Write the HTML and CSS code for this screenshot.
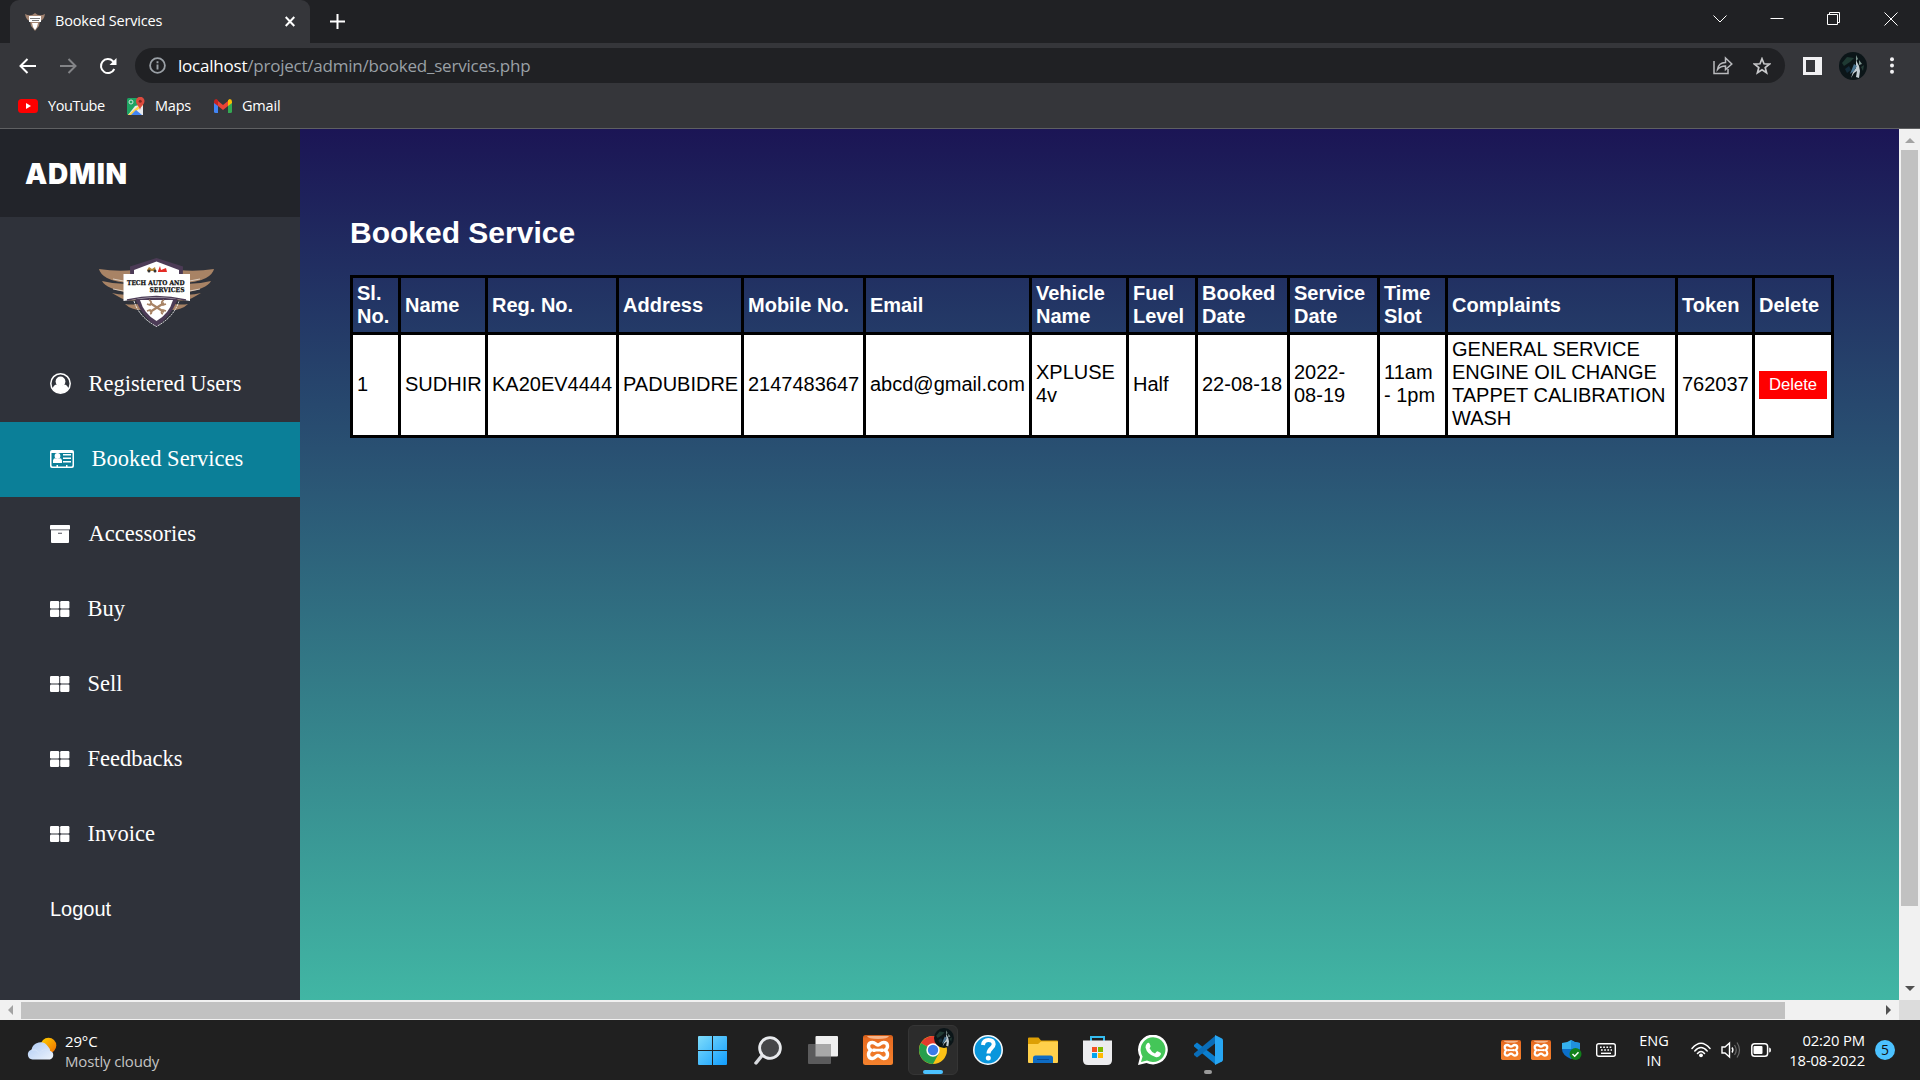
FILE: index.html
```html
<!DOCTYPE html>
<html lang="en">
<head>
<meta charset="utf-8">
<title>Booked Services</title>
<link rel="stylesheet" href="styles.css">
</head>
<body>
<svg class="defs" aria-hidden="true">
  <defs>
    <linearGradient id="orange" x1="0" y1="0" x2="0" y2="1"><stop offset="0" stop-color="#c95a18"/><stop offset=".12" stop-color="#e86c22"/><stop offset="1" stop-color="#f5822d"/></linearGradient>
    <linearGradient id="win" x1="0" y1="0" x2="1" y2="1"><stop offset="0" stop-color="#7fdcfb"/><stop offset="1" stop-color="#119dfd"/></linearGradient>
    <symbol id="xampp" viewBox="0 0 30 30">
      <rect width="30" height="30" rx="2.5" fill="url(#orange)"/>
      <path d="M4 1h22q-1 3-11 3T4 1z" fill="#f5b48b"/>
      <path d="M8 15.200C4 12.500 5 7.500 9.500 7.500C12.500 7.500 12.500 10 15 10S17.500 7.500 20.500 7.500C25 7.500 26 12.500 22 15.200C26 18 25 23.500 20.500 23.500C17.500 23.500 17.500 20.500 15 20.500S12.500 23.500 9.500 23.500C5 23.500 4 18 8 15.200z" fill="none" stroke="#fff" stroke-width="3.400"/>
      <path d="M11 13.500v3.500M19 13.500v3.500M11 15.200h8" stroke="#fff" stroke-width="2.800"/>
    </symbol>
    <symbol id="avatar" viewBox="0 0 28 28">
      <circle cx="14" cy="14" r="14" fill="#0b1518"/>
      <path d="M3 11l5-6 7 1-4 4-6 4z" fill="#1f3a33"/><path d="M6 17l4-3 2 4-4 3z" fill="#142c3a"/>
      <path d="M17 3l2 4-2 2zM20 8l3 4-3 1z" fill="#7f9690"/>
      <path d="M17 8l3 6 1 5-1 7-3-1 1-6-3 2-3 5 2-6 3-4z" fill="#c3ced4"/>
      <path d="M15 12l3 2-3 5-4 3z" fill="#4a7591"/><path d="M22 15l3-2-1 6z" fill="#243c36"/>
    </symbol>
    <symbol id="large" viewBox="0 0 20 16">
      <rect width="9.200" height="7.400" rx="1.200"/><rect x="10.200" width="9.200" height="7.400" rx="1.200"/>
      <rect y="8.600" width="9.200" height="7.400" rx="1.200"/><rect x="10.200" y="8.600" width="9.200" height="7.400" rx="1.200"/>
    </symbol>
    <symbol id="crest" viewBox="0 0 115 70">
      <g fill="#a88365">
        <path d="M0 11q18 3 36 1v13q-19 0-28-5Q1 16 0 11z"/><path d="M3 23q15 4 33 2v9q-14 1-24-4Q5 27 3 23z"/>
        <path d="M13 35q10 3 24 1v6q-9 2-17-3z"/><path d="M26 46q6 1 13 0l4 6q-11 0-17-6z"/>
        <path d="M115 11q-18 3-36 1v13q19 0 28-5 7-4 8-9z"/><path d="M112 23q-15 4-33 2v9q14 1 24-4 7-3 9-7z"/>
        <path d="M102 35q-10 3-24 1v6q9 2 17-3z"/><path d="M89 46q-6 1-13 0l-4 6q11 0 17-6z"/>
      </g>
      <path d="M14 21q10 3 22 2M14 31q10 3 22 2M101 21q-10 3-22 2M101 31q-10 3-22 2" stroke="#eadfd5" fill="none" stroke-width=".8"/>
      <path d="M57.500 0L84 8.500Q85 48 57.500 69Q30 48 31 8.500z" fill="#4c3b56"/>
      <path d="M57.500 3.500L80 12v5H35v-5z" fill="#fff"/>
      <path d="M41 42h33q-4 14-16.500 21Q45 56 41 42z" fill="#fff"/>
      <path d="M35 43q5 16 22.500 25.500Q75 59 80 43" fill="none" stroke="#fff" stroke-width=".9" stroke-dasharray="2 .8"/>
      <path d="M24.500 16H91v27q-33-7-66.500 0z" fill="#fff"/>
      <path d="M28 42q29-7 59 0" fill="none" stroke="#4c3b56" stroke-width="1.300"/>
      <path d="M48 12l2-3 3 2 3-2 1 4h-9z" fill="#b9893a"/><circle cx="50" cy="13" r="1.500" fill="#333"/><circle cx="56" cy="13" r="1.500" fill="#333"/>
      <path d="M59 13l2-5 1 4 5-2 1 4h-9z" fill="#e42b25"/>
      <path d="M51 45l14 9M65 45l-14 9" stroke="#a88365" stroke-width="2.200"/>
      <g fill="none" stroke="#a88365" stroke-width="1.800"><path d="M50 42q4 2 1 5l-3-1M65 42q-4 2-1 5l3-1M48 53l3-1q3 3 0 4M67 53l-3-1q-3 3 0 4"/></g>
      <g class="crest-text"><text x="28" y="27.200" textLength="57.500" lengthAdjust="spacingAndGlyphs">TECH AUTO AND</text><text x="50.500" y="34.400" textLength="35" lengthAdjust="spacingAndGlyphs">SERVICES</text></g>
    </symbol>
  </defs>
</svg>

<header class="browser">
  <div class="tabs">
    <div class="tab">
      <svg width="20" height="20" viewBox="0 0 20 20"><path d="M0 2q6 3 10-1 4 4 10 1-1 6-5 7l-1 5-4 5-4-5-1-5Q1 8 0 2z" fill="#a48572"/><path d="M4 4h12v6H4zM7 11h6l-1 4-2 3-2-3z" fill="#fff"/><path d="M5 6.500h10M7 8.500h7" stroke="#555" stroke-width=".8"/></svg>
      <span class="tab-title">Booked Services</span>
      <svg width="10" height="11" viewBox="0 0 10 11"><path d="M.7 1l8.600 9M9.300 1L.7 10" stroke="#fff" stroke-width="2"/></svg>
    </div>
    <svg class="plus" width="15" height="15" viewBox="0 0 15 15"><path d="M7.500 0v15M0 7.500h15" stroke="#fff" stroke-width="2"/></svg>
    <div class="window-controls">
      <svg width="14" height="14" viewBox="0 0 14 14"><path d="M.5 3.500L7 10l6.500-6.500"/></svg>
      <svg width="14" height="14" viewBox="0 0 14 14"><path d="M.5 6.500h13"/></svg>
      <svg width="14" height="14" viewBox="0 0 14 14"><path d="M.5 2.500h10v10H.5zM2.500 2.500v-2h10v10h-2"/></svg>
      <svg width="14" height="14" viewBox="0 0 14 14"><path d="M.5.500l13 13M13.500.500l-13 13"/></svg>
    </div>
  </div>
  <div class="toolbar">
    <svg width="18" height="16" viewBox="0 0 18 16"><path d="M17 8H2M8.500 1L1.500 8l7 7" stroke="#fff"/></svg>
    <svg width="18" height="16" viewBox="0 0 18 16"><path d="M1 8h15M9.500 1l7 7-7 7" stroke="#838487"/></svg>
    <svg width="18" height="18" viewBox="0 0 18 18"><path d="M15.300 12A7 7 0 1 1 14 4.200L16 6" stroke="#fff"/><path d="M17.500 1v7h-7z" fill="#fff"/></svg>
    <div class="address">
      <svg width="17" height="17" viewBox="0 0 17 17"><circle cx="8.500" cy="8.500" r="7.400" stroke="#9aa0a6" stroke-width="1.800"/><path d="M8.500 7.500v5M8.500 4.300v1.900" stroke="#9aa0a6" stroke-width="1.900"/></svg>
      <span class="url"><b>localhost</b>/project/admin/booked_services.php</span>
      <svg class="share" width="20" height="19" viewBox="0 0 20 19"><path d="M1 5v12.500h14V13" stroke="#b9babd" stroke-width="1.500"/><path d="M4.500 13.500q1-7 8-7V2l6.300 6-6.300 5.500V10q-5 0-8 3.500z" stroke="#b9babd" stroke-width="1.500"/></svg>
      <svg width="18" height="18" viewBox="0 0 18 18"><path d="M9 1.700l2 5.100 5.400.3-4.200 3.400 1.400 5.300L9 12.800l-4.600 3 1.400-5.300L1.600 7.100 7 6.800z" stroke="#c7c8ca" stroke-width="1.700"/></svg>
    </div>
    <svg class="panel" width="19" height="18" viewBox="0 0 19 18"><path d="M0 0h19v18H0zM3 3v12h9V3z" fill="#f1f1f3" fill-rule="evenodd"/></svg>
    <svg class="me" width="28" height="28"><use href="#avatar"/></svg>
    <svg width="4" height="17" viewBox="0 0 4 17"><g fill="#f1f1f3"><circle cx="2" cy="2.200" r="2"/><circle cx="2" cy="8.500" r="2"/><circle cx="2" cy="14.800" r="2"/></g></svg>
  </div>
  <nav class="bookmarks">
    <a><svg width="20" height="14" viewBox="0 0 20 14"><rect width="20" height="14" rx="3.500" fill="#f00"/><path d="M8 4l5 3-5 3z" fill="#fff"/></svg><span class="w-yt">YouTube</span></a>
    <a><svg width="18" height="18" viewBox="0 0 18 18"><rect y="1" width="16" height="17" rx="1.500" fill="#1ea362"/><path d="M8 9l8-2v11H1z" fill="#e8eaed"/><path d="M1 18L16 5v3L5 18z" fill="#ffd24a"/><path d="M4 18l5-5 6 5z" fill="#4285f4"/><circle cx="4" cy="5" r="2" fill="none" stroke="#cfe9dc"/><path d="M13 13C12.500 9 9 8 9 4a4 4 0 0 1 8.500 0c0 4-4 5-4.500 9z" fill="#dd4b3e"/><circle cx="13.200" cy="4.200" r="1.500" fill="#822a23"/></svg><span class="w-maps">Maps</span></a>
    <a><svg width="18" height="14" viewBox="0 0 18 14"><path d="M0 3h4v11H1.500Q0 14 0 12.500z" fill="#4285f4"/><path d="M14 3h4v9.500q0 1.500-1.500 1.500H14z" fill="#34a853"/><path d="M4 2l5 4 5-4v5l-5 4-5-4z" fill="#ea4335"/><path d="M0 2.500Q0 0 2.200 0 3 .4 4 1.300V7L0 4z" fill="#c5221f"/><path d="M18 2.500Q18 0 15.800 0q-.8.400-1.800 1.300V7l4-3z" fill="#fbbc04"/></svg><span class="w-gmail">Gmail</span></a>
  </nav>
</header>

<div class="viewport">
  <div class="page">
    <aside class="sidebar">
      <div class="brand">ADMIN</div>
      <div class="logo"><svg width="115" height="70"><use href="#crest"/></svg></div>
      <nav class="menu">
        <a><svg width="21" height="21" viewBox="0 0 21 21"><circle cx="10.500" cy="10.500" r="9.700" fill="none" stroke="#fff" stroke-width="1.500"/><circle cx="10.500" cy="8.500" r="4.900"/><path d="M2.500 15.500q1.500-4 4.300-4 3.700 2.500 7.400 0 2.800 0 4.300 4-3 4.500-8 4.500t-8-4.500z"/></svg>Registered Users</a>
        <a class="active"><svg width="24" height="18" viewBox="0 0 24 18"><path d="M2 0h20q2 0 2 2v14q0 2-2 2H2q-2 0-2-2V2q0-2 2-2zM1.500 3v12q0 1.300 1 1.500h4V15h1.500v1.500h8V15H17.500v1.500h4q1-.2 1-1.500V3z" fill-rule="evenodd"/><circle cx="7.500" cy="6" r="2.900"/><path d="M3 13V10.500Q3.500 8.300 5 8.300q2.500 1.500 5 0 1.500 0 2 2.200V13z"/><path d="M13 4.700h8M13 8.200h8M13 11.700h8" stroke="#fff" stroke-width="1.500"/></svg>Booked Services</a>
        <a><svg width="21" height="18" viewBox="0 0 21 18"><rect width="20" height="4.500" rx=".8"/><path d="M1 5.200h18V17q0 1-1 1H2q-1 0-1-1z"/><path d="M8 8.300h4" stroke="#6b6d74" stroke-width="1.200"/></svg>Accessories</a>
        <a><svg width="20" height="16"><use href="#large"/></svg>Buy</a>
        <a><svg width="20" height="16"><use href="#large"/></svg>Sell</a>
        <a><svg width="20" height="16"><use href="#large"/></svg>Feedbacks</a>
        <a><svg width="20" height="16"><use href="#large"/></svg>Invoice</a>
        <a class="logout">Logout</a>
      </nav>
    </aside>
    <main class="content">
      <h1>Booked Service</h1>
      <table class="bookings">
        <colgroup><col class="c1"><col class="c2"><col class="c3"><col class="c4"><col class="c5"><col class="c6"><col class="c7"><col class="c8"><col class="c9"><col class="c10"><col class="c11"><col class="c12"><col class="c13"><col class="c14"></colgroup>
        <thead>
          <tr><th>Sl. No.</th><th>Name</th><th>Reg. No.</th><th>Address</th><th>Mobile No.</th><th>Email</th><th>Vehicle Name</th><th>Fuel Level</th><th>Booked Date</th><th>Service Date</th><th>Time Slot</th><th>Complaints</th><th>Token</th><th>Delete</th></tr>
        </thead>
        <tbody>
          <tr><td>1</td><td>SUDHIR</td><td>KA20EV4444</td><td>PADUBIDRE</td><td>2147483647</td><td>abcd@gmail.com</td><td>XPLUSE<br>4v</td><td>Half</td><td>22-08-18</td><td>2022-<br>08-19</td><td>11am<br>- 1pm</td><td>GENERAL SERVICE<br>ENGINE OIL CHANGE<br>TAPPET CALIBRATION<br>WASH</td><td>762037</td><td class="action"><button class="delete">Delete</button></td></tr>
        </tbody>
      </table>
    </main>
  </div>
  <div class="vbar"><i class="up"></i><i class="vthumb"></i><i class="down"></i></div>
  <div class="hbar"><i class="left"></i><i class="hthumb"></i><i class="right"></i></div>
  <div class="corner"></div>
</div>

<footer class="taskbar">
  <div class="weather">
    <svg width="30" height="24" viewBox="0 0 30 24"><defs><linearGradient id="sun" x1="0" y1="0" x2="1" y2="1"><stop offset="0" stop-color="#ffd400"/><stop offset="1" stop-color="#ef6a00"/></linearGradient><linearGradient id="cl" x1="0" y1="0" x2="1" y2="1"><stop offset="0" stop-color="#aecbf5"/><stop offset="1" stop-color="#edf3fb"/></linearGradient></defs><circle cx="21.500" cy="8.500" r="7.800" fill="url(#sun)"/><path d="M5.500 22.500a5 5 0 0 1-1-9.800A9 9 0 0 1 21 9.500q2 2 2 4.200a4.600 4.600 0 0 1 0 8.800z" fill="url(#cl)"/><path d="M4.500 13q5-1.500 8 3 4-5 10-3" stroke="#d6e4f8" fill="none"/></svg>
    <div class="weather-text"><span class="w-temp">29°C</span><span class="w-cond">Mostly cloudy</span></div>
  </div>
  <div class="apps">
    <a><svg width="29" height="29" viewBox="0 0 29 29"><path d="M1 0h13v14H0V1q0-1 1-1zM15 0h13q1 0 1 1v13H15zM0 15h14v14H1q-1 0-1-1zM15 15h14v13q0 1-1 1H15z" fill="url(#win)"/></svg></a>
    <a><svg width="28" height="29" viewBox="0 0 28 29"><path d="M8.500 19L2 27" stroke="#d8dade" stroke-width="3.500" stroke-linecap="round"/><circle cx="16" cy="12" r="10.400" fill="#454648" stroke="#e8eaed" stroke-width="2.800"/></svg></a>
    <a><svg width="30" height="29" viewBox="0 0 30 29"><rect x="7.500" width="22.500" height="20.500" rx="1" fill="#efefef"/><rect y="8" width="23" height="20" rx="1" fill="#5b5b5c"/><path d="M7.500 8H23v12.500H7.500z" fill="#a8a8a8"/></svg></a>
    <a><svg width="30" height="30"><use href="#xampp"/></svg></a>
    <a class="running"><svg width="36" height="38" viewBox="0 0 36 38"><circle cx="15" cy="23" r="14" fill="#fbc116"/><path d="M15 23L2.900 16A14 14 0 0 1 27.100 16z" fill="#e33b2e"/><path d="M2.900 16A14 14 0 0 0 15 37l6-11-6-3z" fill="#269f4c"/><circle cx="15" cy="23" r="6.700" fill="#fff"/><circle cx="15" cy="23" r="5.200" fill="#3a7bea"/><use href="#avatar" x="16" y="1" width="20" height="20"/></svg></a>
    <a><svg width="30" height="30" viewBox="0 0 30 30"><circle cx="15" cy="15" r="14.200" fill="#0996dc" stroke="#f4f8fb" stroke-width="1.600"/><path d="M10 10q.5-5 5.500-5t5.200 4.300c0 4-5.200 4-5.200 9.200" fill="none" stroke="#fff" stroke-width="4"/><circle cx="15.300" cy="23" r="2.500" fill="#fff"/></svg></a>
    <a><svg width="30" height="27" viewBox="0 0 30 27"><path d="M0 1.500Q0 .500 1 .500h9.500L13 3.500h16q1 0 1 1V12H0z" fill="#dd9f04"/><path d="M0 7h10l3-2.500h17V25q0 1-1 1H1q-1 0-1-1z" fill="#ffd04b"/><path d="M5 26v-5q0-2.500 2.500-2.500h15q2.500 0 2.500 2.500v5z" fill="#0e6cc4"/><path d="M9 22.500h12" stroke="#084a91"/></svg></a>
    <a><svg width="29" height="29" viewBox="0 0 29 29"><path d="M8 6V1h13v5" fill="none" stroke="#35bdf0" stroke-width="2"/><path d="M0 4.500h29V24q0 5-5 5H5q-5 0-5-5z" fill="#ececee"/><path d="M9 11h5v5H9z" fill="#f25022"/><path d="M15 11h5v5h-5z" fill="#7fba00"/><path d="M9 17h5v5H9z" fill="#00a4ef"/><path d="M15 17h5v5h-5z" fill="#ffb900"/></svg></a>
    <a><svg width="30" height="30" viewBox="0 0 30 30"><path d="M0 30l2-8A14.900 14.900 0 1 1 8.500 28z" fill="#fff"/><path d="M3 27l1.600-5.600A12.400 12.400 0 1 1 9 25.500z" fill="#44c658"/><path d="M9 8.500q1.500-1.500 2.500 0l1 2.500q.2 1-1 2.200 2 4 5.500 5.200l1.500-1.700q.6-.6 1.500-.2l2.500 1.300q.8.500.2 2-1.500 3-5.200 2.200Q9 19.500 7.500 12.500 7.500 10 9 8.500z" fill="#fff"/></svg></a>
    <a class="open"><svg width="30" height="30" viewBox="0 0 30 30"><path d="M1 10l3-2.500 18 14V29L1 11.500z" fill="#0b7fd0"/><path d="M1 20l3 2.500 18-14V1L1 18.500z" fill="#0a6db8"/><path d="M22 0l7 3.500q1 .5 1 2v19q0 1.500-1 2L22 30z" fill="#27a6f3"/></svg></a>
  </div>
  <div class="tray">
    <svg width="20" height="20"><use href="#xampp"/></svg>
    <svg width="20" height="20"><use href="#xampp"/></svg>
    <svg width="20" height="20" viewBox="0 0 20 20"><path d="M0 3q5 0 9-3 4 3 9 3v6H0z" fill="#35b1ee"/><path d="M9 0q4 3 9 3v6H9z" fill="#2090dc"/><path d="M0 9h18q0 6-9 10Q0 15 0 9z" fill="#0c6fc9"/><circle cx="13.500" cy="14" r="6" fill="#11801b"/><path d="M10.500 14l2.200 2.200 3.800-4" fill="none" stroke="#fff" stroke-width="1.500"/></svg>
    <svg width="20" height="14" viewBox="0 0 20 14"><rect x=".7" y=".7" width="18.600" height="12.600" rx="2" fill="none" stroke="#fff" stroke-width="1.400"/><path d="M4 4.200h12M5 7h11" stroke="#fff" stroke-width="1.600" stroke-dasharray="1.700 1.500"/><path d="M5 10.300h10" stroke="#fff" stroke-width="1.400"/></svg>
    <div class="lang"><span>ENG</span><span>IN</span></div>
    <svg width="20" height="16" viewBox="0 0 20 16"><g fill="none" stroke="#fff" stroke-width="1.500" stroke-linecap="round"><path d="M1 6.500q9-10.500 18 0M3.800 9q6.200-7 12.400 0M6.500 11.500q3.500-4 7 0"/></g><circle cx="10" cy="13.300" r="1.900" fill="#fff"/></svg>
    <svg width="20" height="18" viewBox="0 0 20 18"><path d="M1 6h3l4.500-4v14L4 12H1z" fill="none" stroke="#fff" stroke-width="1.400"/><path d="M11 6.500q1.800 2.500 0 5" fill="none" stroke="#fff" stroke-width="1.400"/><path d="M13.500 4q3.500 5 0 10M16 1.500q5 7.500 0 15" fill="none" stroke="#6a6a6a" stroke-width="1.200"/></svg>
    <svg width="20" height="14" viewBox="0 0 20 14"><rect x=".8" y=".8" width="15.800" height="12.400" rx="2.800" fill="none" stroke="#fff" stroke-width="1.500"/><rect x="2.500" y="3" width="9" height="8" rx="1" fill="#fff"/><path d="M18.200 4.500q1.800 0 1.800 2.500t-1.800 2.500z" fill="#fff"/></svg>
    <div class="clock"><span class="w-time">02:20 PM</span><span class="w-date">18-08-2022</span></div>
    <span class="badge">5</span>
  </div>
</footer>
</body>
</html>
```
FILE: styles.css
```css
* { box-sizing: border-box; }
body {
  margin: 0; width: 1920px; height: 1080px; overflow: hidden;
  display: flex; flex-direction: column;
  font-family: "Liberation Sans", Arial, sans-serif;
}
svg { display: block; flex: none; }
.defs { position: absolute; width: 0; height: 0; }

/* Browser chrome */
.browser { height: 129px; background: #35363a; border-bottom: 1px solid #5f6062; color: #fff; font-family: "Open Sans", sans-serif; }
.tabs { height: 43px; background: #202124; display: flex; align-items: flex-start; padding-left: 10px; }
.tab { width: 300px; height: 43px; background: #35363a; border-radius: 9px 9px 0 0; padding: 3px 15px 4px; display: flex; align-items: center; }
.tab > svg:first-child { margin-top: 1px; }
.tab-title { flex: 1; margin-left: 10px; font-size: 14.5px; letter-spacing: -.2px; line-height: 20px; margin-top: -1px; }
.plus { margin: 14px 0 0 20px; }
.window-controls { margin-left: auto; display: flex; gap: 43px; padding: 12px 22px 0 0; }
.window-controls path { fill: none; stroke: #fff; stroke-width: 1; }
.toolbar { height: 45px; padding: 0 26px 0 19px; display: flex; align-items: center; }
.toolbar > svg path { stroke-width: 2; }
.toolbar > svg, .address svg { fill: none; }
.toolbar > svg + svg { margin-left: 22px; }
.address { flex: 1; height: 35px; margin: 0 18px; border-radius: 18px; background: #202124; display: flex; align-items: center; padding: 0 14px; }
.url { flex: 1; margin-left: 12px; color: #9aa0a6; font-size: 17px; letter-spacing: -.22px; line-height: 24px; }
.url b { font-weight: 400; color: #fff; }
.share { margin-right: 20px; }
.toolbar > .me { margin: 0 1px 0 17px; }
.bookmarks { height: 35px; padding-left: 18px; display: flex; gap: 22px; align-items: center; font-size: 14.5px; }
.bookmarks a { display: flex; align-items: center; gap: 10px; line-height: 20px; }
.bookmarks span { white-space: nowrap; letter-spacing: -.2px; }
.bookmarks .w-yt { width: 57px; letter-spacing: -.4px; } .w-maps { width: 37px; } .w-gmail { width: 38px; }

/* Page viewport and scrollbars */
.viewport { height: 891px; display: grid; grid-template: 871px 20px / 1899px 21px; }
.page { display: flex; overflow: hidden; }
.vbar, .hbar { background: #f1f1f1; display: flex; align-items: center; }
.vbar { flex-direction: column; }
.corner { background: #dcdcdc; }
.vthumb { width: 17px; height: 756px; margin-top: 7px; background: #c1c1c1; }
.hthumb { height: 17px; width: 1764px; margin-left: 8px; background: #c1c1c1; }
.up, .down { border: 5px solid transparent; border-top: 0; border-bottom: 5px solid #a3a3a3; margin-top: 9px; }
.down { border-top: 5px solid #505050; border-bottom: 0; margin: auto 0 9px; }
.left, .right { border: 5px solid transparent; border-left: 0; border-right: 5px solid #a3a3a3; margin-left: 8px; }
.right { border-left: 5px solid #505050; border-right: 0; margin: 0 8px 0 auto; }

/* Admin sidebar */
.sidebar { width: 300px; background: #2f323a; color: #fff; }
.brand { height: 88px; padding-left: 25px; background: #22242a; font: 900 28px/91px Inter, sans-serif; letter-spacing: .8px; }
.logo { height: 130px; padding: 41px 0 0 99px; }
.crest-text { font: 700 6.600px "DejaVu Serif", serif; fill: #111; stroke: #111; stroke-width: .25; }
.menu a { height: 75px; padding: 0 0 2px 50px; display: flex; align-items: center; gap: 17.5px; font: 22.500px "Liberation Serif", "Times New Roman", serif; }
.menu svg { fill: #fff; }
.menu .active { background: #0b7f98; }
.menu .logout { padding-bottom: 0; font: 20px "Liberation Sans", Arial, sans-serif; }

/* Bookings */
.content { flex: 1; padding: 86px 0 0 50px; background: linear-gradient(#1b1555, #41b6a4); }
.content h1 { margin: 0 0 25px; font-size: 30px; line-height: 35px; color: #fff; }
.bookings { width: 1484px; table-layout: fixed; border-collapse: collapse; font-size: 20px; line-height: 23px; }
.bookings th, .bookings td { border: 3px solid #000; padding: 4px 0 4px 4px; text-align: left; vertical-align: middle; }
.bookings th { color: #fff; }
.bookings td { background: #fff; color: #000; white-space: nowrap; padding: 3px 0 5px 4px; }
.bookings .action { padding: 4px 0 4px 4px; }
.bookings thead tr { height: 57px; }
.bookings tbody tr { height: 103px; }
.c1 { width: 48px; } .c2 { width: 87px; } .c3 { width: 131px; } .c4 { width: 125px; } .c5 { width: 122px; }
.c6 { width: 166px; } .c7 { width: 97px; } .c8 { width: 69px; } .c9 { width: 92px; } .c10 { width: 90px; }
.c11 { width: 68px; } .c12 { width: 230px; } .c13 { width: 77px; } .c14 { width: 79px; }
.delete { display: block; width: 68px; height: 28px; padding: 0; border: 0; background: red; color: #fff; font: 16.670px "Liberation Sans", Arial, sans-serif; }

/* Taskbar */
.taskbar { height: 60px; background: #202020; color: #fff; display: grid; grid-template-columns: 685px 550px 1fr; font: 14.500px/20px "Open Sans", sans-serif; }
.weather { display: flex; align-items: center; padding-left: 27px; gap: 8px; }
.weather svg { margin-top: -3px; }
.weather-text, .lang, .clock { display: flex; flex-direction: column; }
.weather-text { font-size: 15px; padding-top: 1px; }
.weather-text span, .clock span { letter-spacing: -.15px; white-space: nowrap; }
.w-cond { color: #c4c4c4; }
.apps { display: flex; }
.apps a { width: 55px; display: flex; align-items: center; justify-content: center; position: relative; }
.apps .running { width: 50px; margin: 5px 2.500px; background: #2c2c2c; border: 1px solid #353535; border-radius: 6px; }
.running svg { margin: -9px 0 0 7px; }
.running::after, .open::after { content: ""; position: absolute; bottom: 0; width: 20px; height: 4px; border-radius: 2px; background: #4cc2ff; }
.open::after { width: 8px; bottom: 6px; background: #9a9a9a; }
.tray { display: flex; align-items: center; padding-left: 266px; }
.tray > svg { margin-right: 10px; }
.tray > svg:nth-child(3) { margin: 0 14px 0 1px; }
.tray > svg:nth-child(4) { margin-right: 18px; }
.lang { width: 40px; margin-right: 17px; text-align: center; padding-top: 1px; }
.clock { width: 84px; align-items: flex-end; margin-right: 10px; font-size: 14.8px; }
.badge { width: 20px; height: 20px; border-radius: 50%; background: #4cc2ff; color: #111; text-align: center; font-size: 14px; }
```
